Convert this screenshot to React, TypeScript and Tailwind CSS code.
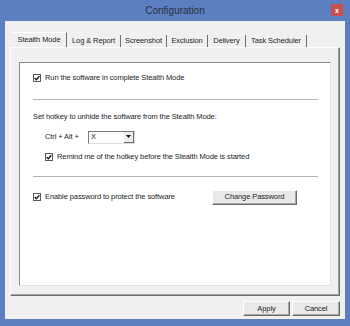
import React from "react";

const font = { fontFamily: '"Liberation Sans", Arial, sans-serif' };

const Check: React.FC<{ checked?: boolean }> = ({ checked = true }) => (
    <span className="w-[8px] h-[8px] border border-[#5a5a5a] bg-white flex items-center justify-center shrink-0">
        {checked && (
            <svg width="6" height="6" viewBox="0 0 6 6">
                <path d="M0.6 3 L2.3 4.7 L5.4 1.2" stroke="#1a1a1a" strokeWidth="1.3" fill="none" />
            </svg>
        )}
    </span>
);

const tabs = [
    { label: "Stealth Mode", w: "w-[55px]" },
    { label: "Log & Report", w: "w-[54px]" },
    { label: "Screenshot", w: "w-[46px]" },
    { label: "Exclusion", w: "w-[41px]" },
    { label: "Delivery", w: "w-[38px]" },
    { label: "Task Scheduler", w: "w-[61px]" },
];

const Button: React.FC<{ label: string; className?: string }> = ({ label, className }) => (
    <div
        className={
            "h-[15px] flex items-center justify-center bg-[#e9e9e9] border-t border-l border-[#fdfdfd] border-r border-b border-r-[#6a6a6a] border-b-[#6a6a6a] shadow-[inset_-1px_-1px_0_#a8a8a8] text-[7.5px] tracking-[-0.1px] text-[#1e1e1e] " +
            (className ?? "")
        }
    >
        {label}
    </div>
);

const App: React.FC = () => {
    return (
        <div className="w-[350px] h-[326px] bg-[#5b7fc0] flex flex-col px-[5px] pb-[7px]" style={font}>
            {/* title bar */}
            <div className="h-[21px] relative flex items-center justify-center">
                <span className="text-[10px] text-[#2b2f3c]">Configuration</span>
                <div className="absolute right-[2px] top-[4px] w-[12px] h-[12px] bg-[#c9504e] flex items-center justify-center">
                    <span className="text-[7px] font-bold text-white leading-none">x</span>
                </div>
            </div>

            {/* dialog body */}
            <div className="flex-1 bg-[#f0f0f0] flex flex-col px-[5px] pt-[11px] pb-[3px]">
                {/* tabs */}
                <div className="h-[15px] flex items-end pl-[2px]">
                    {tabs.map((t, i) => (
                        <div
                            key={t.label}
                            className={
                                t.w +
                                " flex items-center justify-center border-r border-[#6f6f6f] text-[7.5px] tracking-[-0.1px] text-[#1e1e1e] " +
                                (i === 0 ? "h-[15px] border-t border-t-white bg-[#f0f0f0]" : "h-[12px]")
                            }
                        >
                            <span className={i === 0 ? "" : "-mt-[1px]"}>{t.label}</span>
                        </div>
                    ))}
                </div>

                {/* tab panel */}
                <div className="flex-1 border-r border-b border-[#6d6d6d] border-l border-t border-l-white border-t-white shadow-[inset_-1px_-1px_0_#a3a3a3] pl-[8px] pr-[8px] pt-[14px] pb-[9px] flex flex-col">
                    <div className="flex-1 bg-white border-t border-l border-[#8a8a8a] border-r border-b border-r-[#e3e3e3] border-b-[#e3e3e3] pl-[13px] pt-[7px] flex flex-col text-[7.5px] tracking-[-0.1px] text-[#1e1e1e]">
                        <div className="h-[16px] flex items-center gap-[4px]">
                            <Check />
                            <span>Run the software in complete Stealth Mode</span>
                        </div>

                        <div className="mt-[13px] h-[1px] w-[285px] bg-[#b4b4b4]" />

                        <div className="mt-[9px] h-[16px] flex items-center">
                            Set hotkey to unhide the software from the Stealth Mode:
                        </div>

                        <div className="mt-[4px] h-[16px] flex items-center pl-[12px]">
                            <span className="w-[43px]">Ctrl + Alt +</span>
                            <div className="w-[47px] h-[13px] bg-white border-t border-l border-[#7a7a7a] border-r border-b border-r-[#dcdcdc] border-b-[#dcdcdc] flex items-center">
                                <span className="flex-1 pl-[2px]">X</span>
                                <div className="w-[10px] h-[11px] bg-[#ececec] border-r border-b border-[#6a6a6a] flex items-center justify-center">
                                    <svg width="5" height="3" viewBox="0 0 5 3">
                                        <path d="M0 0 H5 L2.5 3 Z" fill="#111" />
                                    </svg>
                                </div>
                            </div>
                        </div>

                        <div className="mt-[4px] h-[16px] flex items-center gap-[4px] pl-[12px]">
                            <Check />
                            <span>Remind me of the hotkey before the Stealth Mode is started</span>
                        </div>

                        <div className="mt-[11px] h-[1px] w-[285px] bg-[#b4b4b4]" />

                        <div className="mt-[12px] h-[16px] flex items-center">
                            <div className="w-[179px] flex items-center gap-[4px]">
                                <Check />
                                <span>Enable password to protect the software</span>
                            </div>
                            <Button label="Change Password" className="w-[85px]" />
                        </div>
                    </div>
                </div>

                {/* bottom buttons */}
                <div className="mt-[5px] flex justify-end gap-[2px]">
                    <Button label="Apply" className="w-[47px]" />
                    <Button label="Cancel" className="w-[48px]" />
                </div>
            </div>
        </div>
    );
};

export default App;
